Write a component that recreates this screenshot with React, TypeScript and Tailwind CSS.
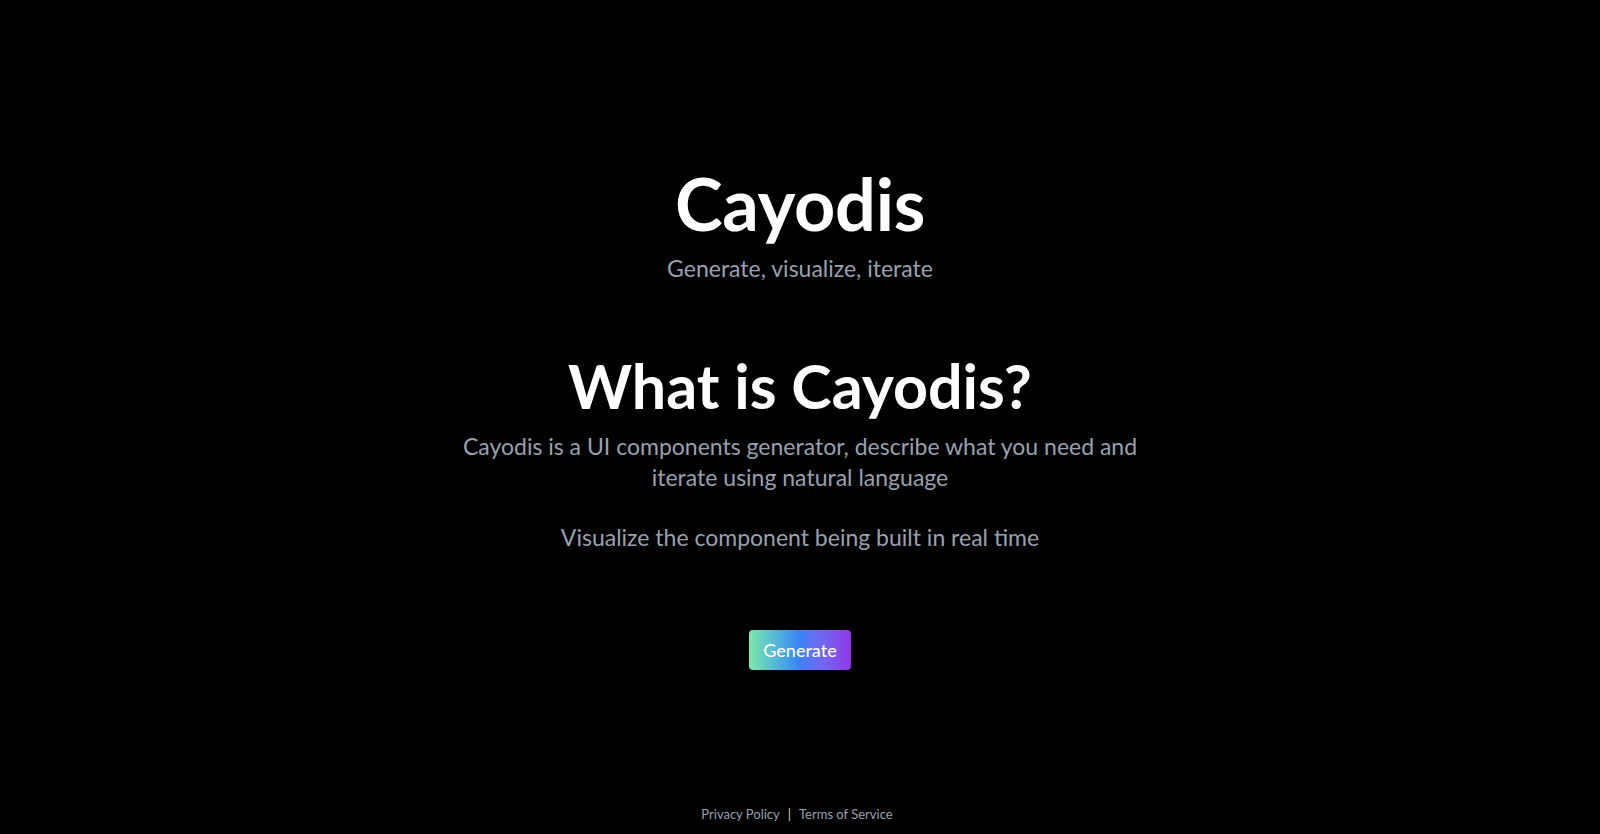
import React from "react";

export default function App() {
  return (
    <div
      className="min-h-screen w-full bg-black text-white flex flex-col"
      style={{ fontFamily: "Lato, 'Open Sans', sans-serif" }}
    >
      <main className="flex-1 flex flex-col items-center text-center">
        <h1 className="mt-[163px] text-[72px] leading-[80px] font-bold tracking-[-0.3px]">Cayodis</h1>
        <p className="mt-[9px] text-[23px] leading-[32px] text-gray-400">Generate, visualize, iterate</p>

        <h2 className="mt-[69px] text-[61px] leading-[66px] font-bold">What is Cayodis?</h2>
        <p className="mt-[12px] max-w-[700px] text-[23px] leading-[31px] text-gray-400">
          Cayodis is a UI components generator, describe what you need and iterate using natural language
        </p>
        <p className="mt-[29px] text-[23px] leading-[31px] text-gray-400">
          Visualize the component being built in real time
        </p>

        <button className="mt-[77px] h-[40px] w-[102px] rounded-[4px] bg-gradient-to-r from-[#7ee8a6] via-[#3b82f6] to-[#9333ea] text-[18px] font-medium text-white">
          Generate
        </button>
      </main>
      <footer className="pb-[10px] pr-[6px] flex items-center justify-center gap-[8px] text-[13px] text-gray-400">
        <a href="#">Privacy Policy</a>
        <span className="text-gray-300">|</span>
        <a href="#">Terms of Service</a>
      </footer>
    </div>
  );
}
